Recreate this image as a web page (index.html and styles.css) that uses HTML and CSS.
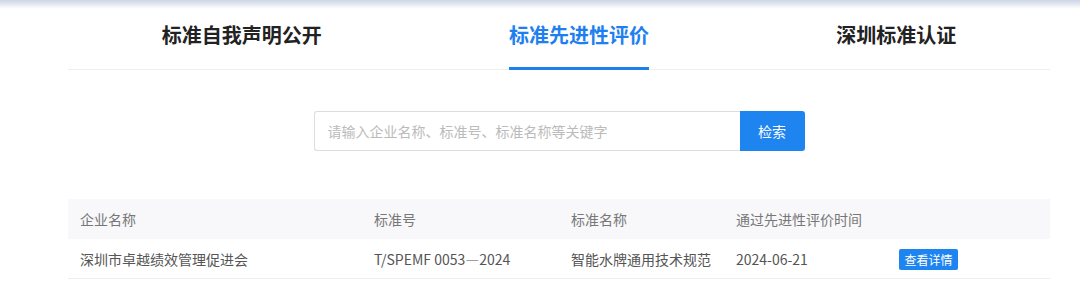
FILE: index.html
```html
<!DOCTYPE html>
<html lang="zh-CN">
<head>
  <meta charset="UTF-8">
  <title>标准先进性评价</title>
  <link rel="stylesheet" href="styles.css">
</head>
<body>
  <div class="top-shade"></div>
  <div id="container">
    <ul class="tabs">
      <li>标准自我声明公开</li>
      <li class="active">标准先进性评价</li>
      <li>深圳标准认证</li>
    </ul>

    <!-- search -->
    <div class="search">
      <input type="text" placeholder="请输入企业名称、标准号、标准名称等关键字">
      <button>检索</button>
    </div>

    <table class="result">
      <thead>
        <tr>
          <th class="c1">企业名称</th>
          <th class="c2">标准号</th>
          <th class="c3">标准名称</th>
          <th class="c4">通过先进性评价时间</th>
          <th></th>
        </tr>
      </thead>
      <tbody>
        <tr>
          <td>深圳市卓越绩效管理促进会</td>
          <td>T/SPEMF 0053—2024</td>
          <td>智能水牌通用技术规范</td>
          <td>2024-06-21</td>
          <td><span class="detail-btn">查看详情</span></td>
        </tr>
      </tbody>
    </table>
  </div>
</body>
</html>
```

FILE: styles.css
```css
html, body {
  margin: 0;
  padding: 0;
  background: #fff;
  font-family: "Noto Sans CJK SC", "Noto Sans", sans-serif;
}
.top-shade {
  height: 9px;
  background: linear-gradient(#cbd5e5, #fff);
}
#container {
  width: 982px;
  margin: 0 0 0 68px;
}
.tabs {
  list-style: none;
  margin: 0;
  padding: 0;
  display: flex;
  justify-content: space-around;
  border-bottom: 1px solid #eee;
}
.tabs li {
  font-size: 20px;
  font-weight: bold;
  color: #222;
  line-height: 30px;
  padding: 11px 0 17px;
  border-bottom: 3px solid transparent;
  margin-bottom: -1px;
}
.tabs li.active {
  color: #1e80f0;
  border-bottom-color: #1e80f0;
}
.search {
  display: flex;
  justify-content: center;
  margin-top: 41px;
}
.search input {
  width: 426px;
  height: 40px;
  box-sizing: border-box;
  border: 1px solid #ddd;
  border-right: none;
  border-radius: 3px 0 0 3px;
  padding: 0 13px;
  font-family: inherit;
  font-size: 14px;
  outline: none;
}
.search input::placeholder {
  color: #bbb;
}
.search button {
  width: 65px;
  height: 40px;
  border: none;
  border-radius: 0 3px 3px 0;
  background: #1e84f0;
  color: #fff;
  font-family: inherit;
  font-size: 14px;
  padding: 0;
}
.result {
  width: 100%;
  margin-top: 48px;
  border-collapse: collapse;
  font-size: 14px;
}
.result th, .result td {
  text-align: left;
  padding: 0 12px;
  font-weight: normal;
}
.result th {
  background: #f8f8fa;
  color: #777;
  height: 40px;
}
.result td {
  color: #555;
  height: 39px;
  border-bottom: 1px solid #eee;
}
.result .c1 { width: 270px; }
.result .c2 { width: 173px; }
.result .c3 { width: 141px; }
.result .c4 { width: 139px; }
.detail-btn {
  display: inline-block;
  width: 59px;
  height: 21px;
  line-height: 21px;
  text-align: center;
  background: #1e84f0;
  color: #fff;
  font-size: 12px;
  border-radius: 2px;
  vertical-align: middle;
}
```
